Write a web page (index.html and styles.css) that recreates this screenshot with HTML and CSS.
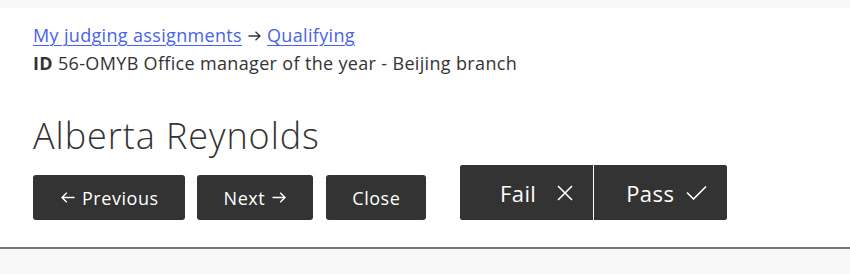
FILE: index.html
```html
<!DOCTYPE html>
<html lang="en">
<head>
<meta charset="utf-8">
<title>Alberta Reynolds</title>
<link rel="stylesheet" href="styles.css">
</head>
<body>
<div class="topband"></div>
<main class="page">
  <nav class="crumbs"><a href="#">My judging assignments</a> <svg class="arrow arrow-crumb" width="13" height="10" viewBox="0 0 13 10"><path d="M0.5 5 H12 M7.5 0.8 L12 5 L7.5 9.2" stroke="#333" stroke-width="1.3" fill="none"/></svg> <a href="#">Qualifying</a></nav>
  <p class="meta"><strong>ID</strong> 56-OMYB Office manager of the year - Beijing branch</p>
  <h1 class="title">Alberta Reynolds</h1>
  <div class="actions">
    <button class="btn btn-prev"><svg class="arrow arrow-left" width="14" height="11" viewBox="0 0 14 11"><path d="M13.5 5.5 H1 M5.8 0.8 L1 5.5 L5.8 10.2" stroke="#fff" stroke-width="1.4" fill="none"/></svg>Previous</button>
    <button class="btn btn-next">Next<svg class="arrow arrow-right" width="14" height="11" viewBox="0 0 14 11"><path d="M0.5 5.5 H13 M8.2 0.8 L13 5.5 L8.2 10.2" stroke="#fff" stroke-width="1.4" fill="none"/></svg></button>
    <button class="btn btn-close">Close</button>
    <div class="verdict">
      <button class="vbtn vbtn-fail">Fail<svg class="icon icon-x" width="16" height="16" viewBox="0 0 16 16"><path d="M1 1 L15 15 M15 1 L1 15" stroke="#fff" stroke-width="1.6" fill="none"/></svg></button>
      <button class="vbtn vbtn-pass">Pass<svg class="icon icon-check" width="21" height="15" viewBox="0 0 21 15"><path d="M1 7.5 L7.5 14 L20 1.5" stroke="#fff" stroke-width="1.6" fill="none"/></svg></button>
    </div>
  </div>
</main>
<footer class="footer"></footer>
</body>
</html>
```
FILE: styles.css
```css
html, body {
  margin: 0;
  padding: 0;
  background: #fff;
  font-family: "Open Sans", "Liberation Sans", sans-serif;
  color: #333;
  letter-spacing: 0.021em;
}
.topband {
  height: 8px;
  background: #f8f8f8;
}
.page {
  padding: 13px 33px 0;
}
.crumbs, .meta {
  margin: 0;
  font-size: 18px;
  line-height: 28px;
}
.crumbs a {
  color: #4862e8;
  text-decoration: underline;
  text-decoration-thickness: 1px;
  text-underline-offset: 3px;
}
.arrow-crumb {
  vertical-align: 1px;
  margin: 0 1px;
}
.meta strong {
  font-weight: 700;
}
.title {
  margin: 37px 0 0;
  font-size: 36px;
  line-height: 44px;
  font-weight: 300;
  letter-spacing: 0.026em;
  color: #333;
}
.actions {
  margin-top: 7px;
  display: flex;
  align-items: flex-end;
  gap: 12px;
}
.btn {
  height: 45px;
  border: none;
  border-radius: 3px;
  background: #333;
  color: #fff;
  font-family: inherit;
  letter-spacing: 0.03em;
  font-size: 18px;
  padding: 0 26px;
  display: flex;
  align-items: center;
}
.btn-prev {
  padding: 0 26px 0 28px;
}
.btn-next {
  padding: 0 27px;
}
.arrow-left {
  margin-right: 7px;
}
.arrow-right {
  margin-left: 7px;
}
.btn-close {
  margin-left: 1px;
}
.verdict {
  margin-left: 22px;
  display: flex;
  height: 55px;
  border-radius: 3px;
  overflow: hidden;
  background: #333;
}
.vbtn {
  width: 133px;
  height: 55px;
  border: none;
  background: #333;
  color: #fff;
  font-family: inherit;
  font-size: 22px;
  letter-spacing: 0.02em;
  display: flex;
  align-items: center;
  justify-content: flex-end;
  padding: 0 20px 0 0;
}
.vbtn-pass {
  border-left: 1px solid #fff;
  width: 134px;
}
.icon-x {
  margin-left: 21px;
}
.icon-check {
  margin-left: 12px;
}
.footer {
  margin-top: 27px;
  border-top: 2px solid #777;
  height: 30px;
  background: #f8f8f8;
}
```
